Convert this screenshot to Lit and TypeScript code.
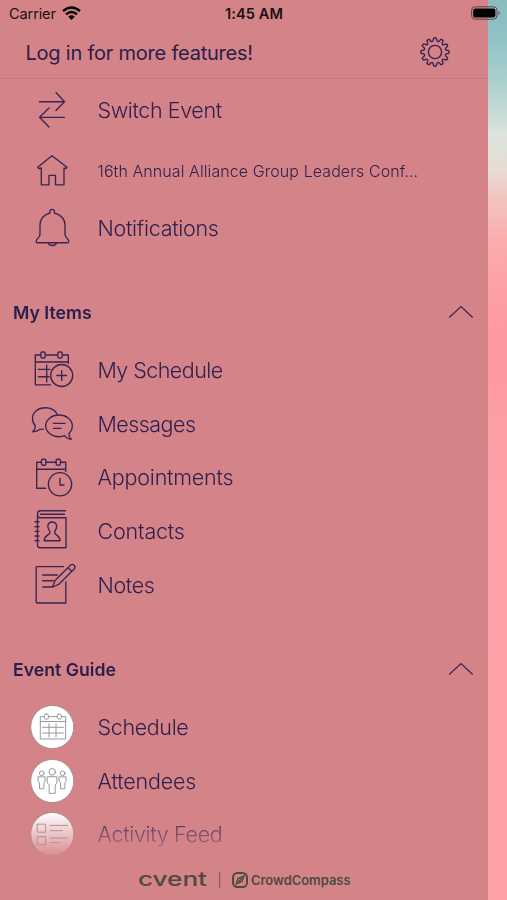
import { LitElement, html, css, svg } from "lit";
import { customElement, property } from "lit/decorators.js";

const person = (x: number, y: number, s: number) => svg`
  <circle cx=${x} cy=${y} r=${3.3 * s}></circle>
  <path transform="translate(${x} ${y}) scale(${s})" vector-effect="non-scaling-stroke"
    d="M-4.7 4.9H4.7V11.5L3 13V21.5H-3V13L-4.7 11.5Z"></path>`;

const rings = (xs: number[], y: number, w = 2.2, h = 3) =>
  xs.map((x) => svg`<rect x=${x - w} y=${y - h} width=${w * 2} height=${h * 2} rx="1.4"></rect>`);

const icons: Record<string, unknown> = {
  switch: svg`<path d="M11.5 15.7H36.3M28 6.5L36.5 15.7L28 24.5M36.5 31.3H11.8M21 22L11.5 31.3L21 41"></path>`,
  home: svg`<path d="M24 8.7L9.7 20.2L10.8 21.6L13.3 21V37.8H21V28.3H27.5V37.8H36V21L38 21.6L39 20.2Z"></path>`,
  bell: svg`<path d="M22 9V7.6a2.2 2.2 0 0 1 4.4 0V9C32.500 10.300 37 15 37 21V30.500C37 33 40.800 35.500 40.800 37.400Q40.800 38.700 39.500 38.700H9.300Q8.100 38.700 8.100 37.400C8.100 35.500 12 33 12 30.500V21C12 15 16 10.300 22 9M20 38.900Q20.600 41.500 24.300 41.500Q28 41.500 28.600 38.900"></path>`,
  mySchedule: svg`<path d="M12.500 9H7.300V38.800H22.500M17.500 9H29.500M34.500 9H40.300V17.500M7.300 16H40.300M10.300 23.300H22M10.300 30.700H21M18.700 19V36M28.800 29.500H38.600M33.700 24.600V34.400"></path>
    ${rings([15, 32], 9)}<circle cx="33.700" cy="29.500" r="11"></circle>`,
  messages: svg`<path d="M29 14C27 10 23 7.700 17.300 7.700C10 7.700 4.500 12.500 4.500 18.500C4.500 21.500 5.700 24.200 7.400 26C7.300 28.500 6.500 30.300 4.700 31.800C8.500 31.800 10.500 30.500 12 29.300L15.300 29.200
    M40.900 33.800C42.900 31.800 44.300 29 44.300 25.800C44.300 19.800 38.300 15 31 15S17.700 19.800 17.700 25.800S23.600 36.700 31 36.700C33 36.700 35 36.400 36.700 35.700C38 37.500 40.500 39.200 43.300 39.300C41.600 37.800 41 36 40.900 33.800M25.300 23.300H37M25.300 28.300H33"></path>`,
  appointments: svg`<path d="M13.200 9.200H8.700V35.200H17.700M18.200 9.200H27.800M32.800 9.200H37.700V18.500M8.700 16.200H37.700M32 25.200V32H36"></path>
    ${rings([15.700, 30.300], 9.200)}<circle cx="32" cy="31.200" r="11.600"></circle>`,
  contacts: svg`<path d="M37.500 3.700H12.500Q9.500 3.700 9.500 6.700V38Q9.500 40.700 12.200 40.700H38V10.700H12.500Q9.500 10.700 9.500 8M12.300 7.200H36.500M7 14.700H11M7 19.700H11M7 24.400H11M7 29H11M7 33.700H11M21.800 26V24.200C18.500 20.500 19.400 15 24.200 15S30 20.500 26.700 24.200V26C27.500 28.500 32 28.300 32 33.700H16.200C16.200 28.300 21 28.500 21.800 26Z"></path>`,
  notes: svg`<path d="M35.500 5.600H9Q8.200 5.600 8.200 6.400V41Q8.200 42 9.200 42H37.800V21M14.700 14H29.300M14.700 19.700H25M14.700 26H24.500L27 19.500L42.200 4.400C43.300 3 45 3 46 4.100S47 7.200 46 8.300L30.800 23.300L24.500 26M40 6.600L43.800 10.500"></path>`,
  schedule: svg`<circle class="disc" cx="24.300" cy="24" r="21.600"></circle>
    <path d="M16.300 13.600H12.300V36H37.700V13.600H33.500M20.500 13.600H29.200M12.300 18.500H37.700M14.500 24.300H35.500M14.500 30H35.500M21 20.700V34M28 20.700V34"></path>${rings([18.400, 31.300], 13.600, 2, 2.500)}`,
  attendees: svg`<circle class="disc" cx="24.300" cy="24" r="21.600"></circle>${person(24.200, 14.800, 1)}${person(13.700, 16.300, 0.720)}${person(34.700, 16.300, 0.720)}`,
  feed: svg`<circle class="disc" cx="24.300" cy="24" r="21.600"></circle>
    <path d="M9.600 14.200H17.600V22.200H9.600ZM9.600 26.700H17.600V34.700H9.600ZM22 15.400H39.700M22 20.700H34.700M22 28H39.700M22 32.700H32"></path>`,
};

@customElement("menu-row")
class MenuRow extends LitElement {
  @property() icon = "";
  @property() label = "";
  @property({ type: Boolean }) small = false;
  @property({ type: Boolean }) round = false;
  @property({ type: Number }) spacing = 0;

  static styles = css`
    :host { display: flex; align-items: center; height: 53.800px; padding-left: 28px; }
    svg { width: 48px; height: 48px; flex: none; fill: none; stroke: #39254f; stroke-width: 1.350;
      stroke-linecap: round; stroke-linejoin: round; overflow: visible; }
    .round { stroke: #999; stroke-width: 1; }
    .disc { fill: #fff; stroke: #a18e90; }
    .label { margin-left: 21.500px; font-size: 21.500px; font-weight: 340; color: #30204f; white-space: nowrap; }
    .small { font-size: 16px; }
  `;

  render() {
    return html`<svg class=${this.round ? "round" : ""} viewBox="0 0 48 48">${icons[this.icon]}</svg>
      <span class="label ${this.small ? "small" : ""}" style="letter-spacing:${this.spacing}px">${this.label}</span>`;
  }
}

@customElement("section-title")
class SectionTitle extends LitElement {
  @property() label = "";
  static styles = css`
    :host { display: flex; align-items: center; justify-content: space-between; height: 54px; padding: 0 14px 0 13px;
      font-size: 17.700px; font-weight: 600; color: #2a1d4c; }
    svg { width: 26px; height: 14px; fill: none; stroke: #39254f; stroke-width: 1.200; }
  `;
  render() {
    return html`<span>${this.label}</span><svg viewBox="0 0 26 14"><path d="M1.200 12.500L13 1.500L24.700 12.500"></path></svg>`;
  }
}

function gearPath() {
  const teeth = 12;
  const pts: string[] = [];
  for (let i = 0; i < teeth; i++) {
    const a = (i * 2 * Math.PI) / teeth - Math.PI / 2;
    const at = (r: number, d: number) => `${(16 + r * Math.cos(a + d)).toFixed(2)} ${(16 + r * Math.sin(a + d)).toFixed(2)}`;
    pts.push(`${i ? "L" : "M"}${at(12, -0.140)}L${at(13.600, -0.110)}Q${at(15, 0)} ${at(13.600, 0.110)}L${at(12, 0.140)}Q${at(9.600, 0.262)} ${at(12, 0.383)}`);
  }
  return pts.join("") + "Z";
}

@customElement("app-root")
class AppRoot extends LitElement {
  static styles = css`
    :host { display: block; position: relative; width: 507px; height: 900px; overflow: hidden;
      font-family: Inter, "Liberation Sans", sans-serif;
      background: linear-gradient(#8abcc0 0, #8fc2c4 35px, #a9cfcd 80px, #dce4dc 135px, #e6dcd3 170px, #f2c4bf 200px, #fcacae 240px, #fd9ea4 300px, #fb9aa0 350px, #ffa0a8 480px, #ff9fa6 900px); }
    .drawer { display: flex; flex-direction: column; width: 487.500px; height: 900px; background: #d48489; }
    .status { position: absolute; top: 0; left: 0; width: 507px; height: 27px; box-sizing: border-box; padding: 0 6px 0 9px;
      display: grid; grid-template-columns: 1fr auto 1fr; align-items: center; font-size: 14.600px; color: #1d1014; }
    .carrier { display: flex; align-items: center; gap: 6px; letter-spacing: -0.150px; }
    .carrier svg { width: 19px; height: 14px; margin-bottom: 2px; }
    .time { font-weight: 600; letter-spacing: 0.100px; margin-left: -2px; }
    .battery { width: 30px; height: 14px; justify-self: end; margin-bottom: 1px; }
    .login { display: flex; align-items: center; justify-content: space-between; height: 51px; margin-top: 27px; padding: 0 36.500px 0 25.500px;
      border-bottom: 1px solid #c67a81; font-size: 20px; letter-spacing: -0.220px; color: #2a1d4c; }
    .gear { width: 32px; height: 32px; margin-bottom: 1.500px; fill: none; stroke: #39254f; stroke-width: 1.400; stroke-linejoin: round; }
    .list { height: 781px; flex: none; overflow: hidden;
      -webkit-mask-image: linear-gradient(#000 733px, transparent 780px); mask-image: linear-gradient(#000 733px, transparent 780px); }
    .first { height: 61px; }
    .event { height: 61px; }
    .bell { height: 54px; }
    .title { margin: 30px 0 4px; }
    .guide { margin: 30.500px 0 3.500px; }
    .brand { display: flex; align-items: center; height: 40px; padding-left: 138px; }
    .brand svg { width: 230px; height: 24px; fill: #4d4943; }
  `;

  render() {
    return html`
      <div class="drawer">
        <div class="login">
          <span>Log in for more features!</span>
          <svg class="gear" viewBox="0 0 32 32"><path d=${gearPath()}></path><circle cx="16" cy="16" r="6.600"></circle></svg>
        </div>
        <div class="list">
          <menu-row class="first" icon="switch" label="Switch Event" spacing="-0.4"></menu-row>
          <menu-row class="event" icon="home" small label="16th Annual Alliance Group Leaders Conf..." spacing="0.08"></menu-row>
          <menu-row class="bell" icon="bell" label="Notifications" spacing="-0.29"></menu-row>
          <section-title class="title" label="My Items"></section-title>
          <menu-row icon="mySchedule" label="My Schedule" spacing="-0.56"></menu-row>
          <menu-row icon="messages" label="Messages" spacing="-0.54"></menu-row>
          <menu-row icon="appointments" label="Appointments" spacing="-0.2"></menu-row>
          <menu-row icon="contacts" label="Contacts" spacing="-0.18"></menu-row>
          <menu-row icon="notes" label="Notes" spacing="-0.35"></menu-row>
          <section-title class="title guide" label="Event Guide"></section-title>
          <menu-row round icon="schedule" label="Schedule" spacing="-0.36"></menu-row>
          <menu-row round icon="attendees" label="Attendees" spacing="-0.18"></menu-row>
          <menu-row round icon="feed" label="Activity Feed" spacing="-0.34"></menu-row>
        </div>
        <div class="brand">
          <svg viewBox="0 0 230 24">
            <text x="0" y="18" font-size="18.500" font-weight="550" textLength="69" lengthAdjust="spacingAndGlyphs">cvent</text>
            <rect x="81" y="4" width="1.200" height="16" opacity=".6"></rect>
            <g fill="none" stroke="#4d4943" stroke-width="2"><rect x="95" y="5" width="14" height="14" rx="4.500"></rect>
              <path stroke-width="1.400" d="M106 8L100 10.500L98.200 16L104 13.500ZM100.500 13.800L104 10.300"></path></g>
            <text x="113" y="17" font-size="13" font-weight="600" textLength="99.500" lengthAdjust="spacingAndGlyphs">CrowdCompass</text>
          </svg>
        </div>
      </div>
      <div class="status">
        <span class="carrier">Carrier
          <svg viewBox="0 0 19 14"><g fill="none" stroke="#000" stroke-width="2.400"><path d="M1 5.200Q9.500 -2.400 18 5.200M4 8.400Q9.500 3.400 15 8.400"></path></g><path d="M6.300 10.700Q9.500 8 12.700 10.700L9.500 14Z"></path></svg>
        </span>
        <span class="time">1:45 AM</span>
        <svg class="battery" viewBox="0 0 30 14"><rect x=".6" y=".8" width="25.400" height="12.400" rx="3.500" fill="none" stroke="#633f43" stroke-width="1"></rect><rect x="2.200" y="2.500" width="22.200" height="9" rx="2"></rect><path d="M27.500 5Q29.200 5.800 29.200 7T27.500 9Z" fill="#566e70"></path></svg>
      </div>`;
  }
}
